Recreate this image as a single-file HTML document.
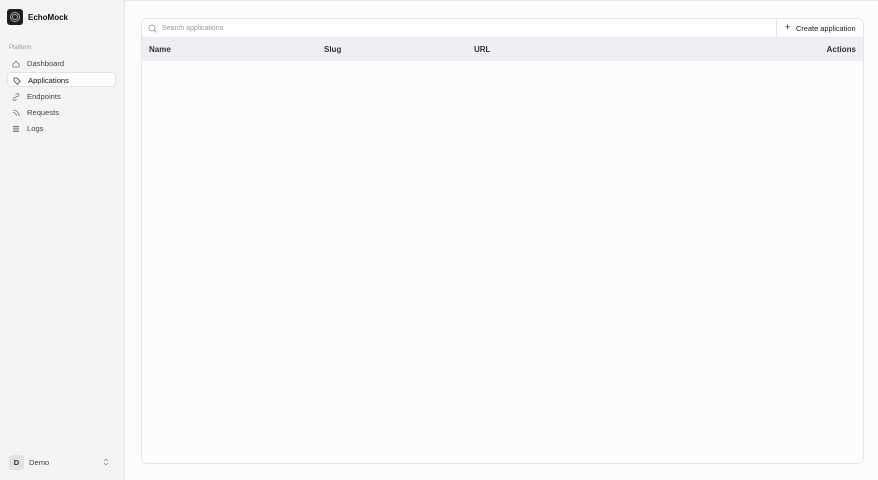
<!DOCTYPE html>
<html><head><style>
*{box-sizing:border-box;margin:0;padding:0}
body{width:878px;height:480px;background:#fcfcfc;font-family:"Liberation Sans",sans-serif;position:relative;overflow:hidden;color:#222}
.side{position:absolute;left:0;top:0;width:125px;height:480px;background:#f4f4f4;border-right:1px solid #e6e6e6}
.logo{position:absolute;left:7px;top:9px;width:16px;height:16px;border-radius:3px;background:#1f1f1f}
.brand{position:absolute;left:28px;top:12.5px;font-size:8px;font-weight:bold;color:#111}
.plat{position:absolute;left:9px;top:44.5px;font-size:6px;color:#999}
.item{position:absolute;left:7px;width:109px;height:15px;font-size:7.6px;color:#444;padding-left:20px;line-height:15px}
.item svg{position:absolute;left:5px;top:3.5px}
.act{background:#fff;border:1px solid #e4e4e4;border-radius:4px;color:#111}
.main{position:absolute;left:141px;top:18px;width:723px;height:446px;border:1px solid #e6e6e6;border-radius:6px;background:#fcfcfc;overflow:hidden}
.search{height:19px;border-bottom:1px solid #e6e6e6;background:#fff;position:relative;font-size:7px;color:#999;line-height:19px;padding-left:20px}
.btn{position:absolute;right:0;top:0;height:19px;width:87px;border-left:1px solid #e6e6e6;color:#222;font-size:7.4px;padding-left:19px}
.thead{height:23px;background:#eeeff2;position:relative;font-size:8px;font-weight:bold;color:#333;line-height:23px}
.thead span{position:absolute}
</style></head><body>
<div style="position:absolute;left:0;top:0;width:878px;height:1px;background:#e8e8e8"></div>
<div class="side">
<div class="logo"><svg width="16" height="16"><circle cx="8" cy="8" r="4.5" fill="none" stroke="#aaa" stroke-width="1"/><circle cx="8" cy="8" r="2.5" fill="none" stroke="#aaa" stroke-width="1"/></svg></div>
<div class="brand">EchoMock</div>
<div class="plat">Platform</div>
<div class="item" style="top:56px"><svg width="8" height="8" viewBox="0 0 8 8"><path d="M1 4L4 1.2 7 4V7H1Z" fill="none" stroke="#777" stroke-width=".8"/></svg>Dashboard</div>
<div class="item act" style="top:72px"><svg width="8" height="8" viewBox="0 0 8 8"><path d="M1 1H4L7.3 4.3 4.3 7.3 1 4Z" fill="none" stroke="#444" stroke-width=".8"/></svg>Applications</div>
<div class="item" style="top:89px"><svg width="8" height="8" viewBox="0 0 8 8"><path d="M3 5L5 3M2.5 4L1.5 5a1.4 1.4 0 002 2l1-1M5.5 4l1-1a1.4 1.4 0 00-2-2l-1 1" fill="none" stroke="#777" stroke-width=".8"/></svg>Endpoints</div>
<div class="item" style="top:105px"><svg width="8" height="8" viewBox="0 0 8 8"><path d="M1 1a6 6 0 016 6M1 3.5A3.5 3.5 0 014.5 7M1.5 6.5h.1" fill="none" stroke="#777" stroke-width=".8"/></svg>Requests</div>
<div class="item" style="top:121px"><svg width="8" height="8" viewBox="0 0 8 8"><path d="M1 1.5H7M1 3.2H7M1 4.9H7M1 6.6H7" stroke="#777" stroke-width=".9"/></svg>Logs</div>
<div style="position:absolute;left:9px;top:455px;width:15px;height:15px;border-radius:3px;background:#e2e2e2;font-size:7.5px;font-weight:bold;text-align:center;line-height:15px;color:#333">D</div>
<div style="position:absolute;left:29px;top:458px;font-size:7.6px;color:#444">Demo</div>
<svg style="position:absolute;left:103px;top:458px" width="6" height="8" viewBox="0 0 6 8"><path d="M1 3L3 1 5 3M1 5L3 7 5 5" fill="none" stroke="#888" stroke-width=".7"/></svg>
</div>
<div class="main">
<div class="search"><svg style="position:absolute;left:6px;top:5px" width="9" height="9" viewBox="0 0 9 9"><circle cx="4" cy="4" r="3" fill="none" stroke="#999" stroke-width=".8"/><path d="M6.2 6.2L8.3 8.3" stroke="#999" stroke-width=".8"/></svg>Search applications
<div class="btn"><span style="position:absolute;left:8px;font-size:9px;top:-1px">+</span>Create application</div></div>
<div class="thead"><span style="left:7px">Name</span><span style="left:182px">Slug</span><span style="left:332px">URL</span><span style="right:7px">Actions</span></div>
</div>
</body></html>
